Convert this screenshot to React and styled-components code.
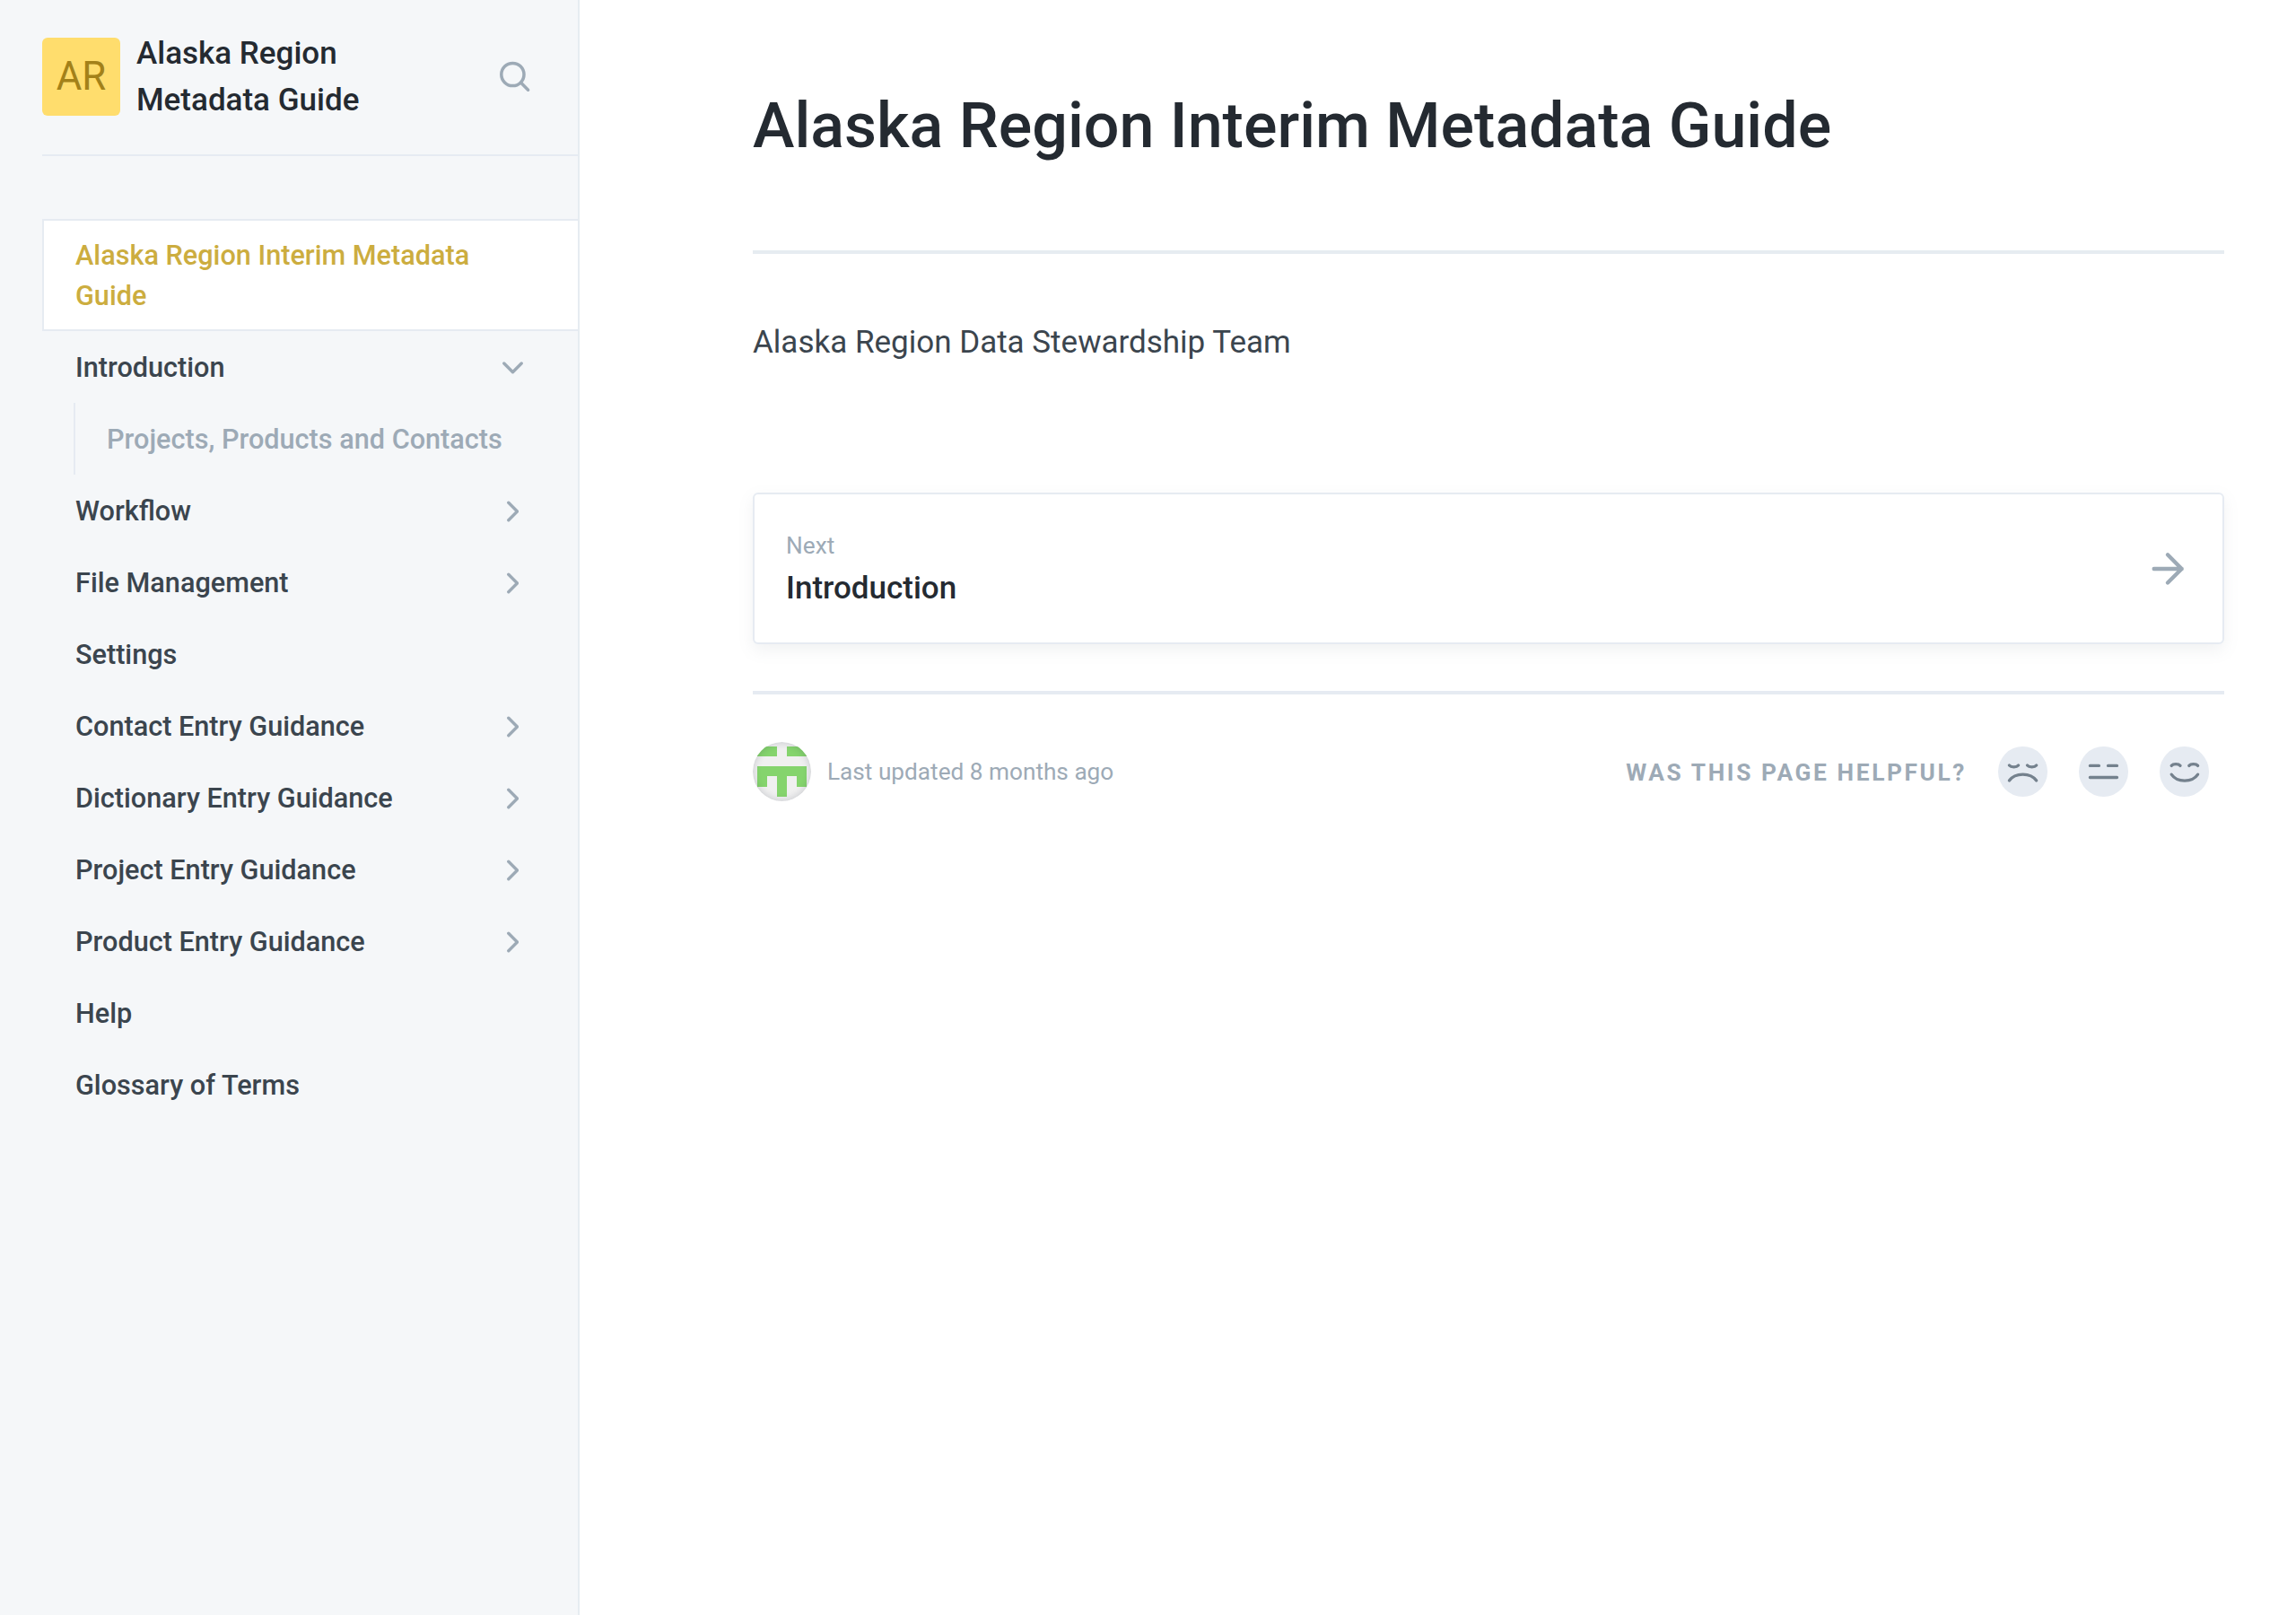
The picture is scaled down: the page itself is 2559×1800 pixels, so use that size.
import React from 'react';
import styled, { createGlobalStyle } from 'styled-components';

const Global = createGlobalStyle`
  * { box-sizing: border-box; }
  body { margin: 0; background: #fff; font-family: Roboto, sans-serif; color: #3b454e; }
  h1, p { margin: 0; }
  a { color: inherit; text-decoration: none; }
  svg { display: block; flex: none; }
`;

const Page = styled.div`display: flex; min-height: 1800px;`;

const Sidebar = styled.aside`
  flex: none; width: 646px; padding-left: 47px;
  background: #f5f7f9; border-right: 2px solid #e6ecf1;
`;
const Brand = styled.header`
  display: flex; align-items: center; height: 174px; padding: 0 52px 1px 0;
  border-bottom: 2px solid #e6ebf2;
`;
const Logo = styled.div`
  display: flex; align-items: center; justify-content: center; flex: none;
  width: 87px; height: 87px; border-radius: 6px;
  background: #ffdd6d; color: #a38119; font-size: 43.75px; line-height: 1;
`;
const BrandName = styled.div`
  flex: 1; padding: 1px 100px 0 18px;
  color: #242a31; font-size: 35px; font-weight: 500; line-height: 52px;
`;
const Nav = styled.nav`padding-top: 70px;`;
const NavLink = styled.a`
  display: flex; align-items: center; justify-content: space-between;
  min-height: 80px; padding: 0 55px 0 37px;
  font-size: 30.65px; font-weight: 500; line-height: 45px;
`;
const ActiveLink = styled(NavLink)`
  height: 125px; padding: 0 57px 0 35px; color: #ccad3f;
  background: #fff; border: 2px solid #e6ebf2; border-right: 0;
`;
const SubNav = styled.div`margin-left: 35px; border-left: 2px solid #e6ebf2;`;
const SubLink = styled(NavLink)`padding: 0 35px; color: #9daab6;`;
const IconSlot = styled.span`display: flex; justify-content: center; width: 35px; color: #9daab6;`;
const ChevronSlot = styled(IconSlot)`padding-top: 2px;`;

const Main = styled.main`flex: 1; padding: 96px 80px 0 193px;`;
const Title = styled.h1`color: #242a31; font-size: 70px; font-weight: 500; line-height: 88px;`;
const Rule = styled.div`height: 4px; background: #e6ebf2;`;
const TitleRule = styled(Rule)`margin-top: 95px; background: #e6ecf1;`;
const Paragraph = styled.p`margin-top: 71px; font-size: 35px; line-height: 56px;`;
const NextCard = styled.a`
  display: flex; align-items: center; justify-content: space-between;
  height: 169px; margin: 139px 0 52px; padding: 0 35px;
  border: 2px solid #e6ebf2; border-radius: 6px; background: #fff; color: #9daab6;
  box-shadow: 0 6.5px 17.5px rgba(116, 129, 141, 0.1);
`;
const NextText = styled.div`padding-top: 1px;`;
const NextLabel = styled.div`color: #9daab6; font-size: 26.25px; line-height: 42px;`;
const NextTitle = styled.div`padding-top: 1px; color: #242a31; font-size: 35px; font-weight: 500; line-height: 52px;`;
const PageFooter = styled.footer`display: flex; align-items: center; height: 66px; margin-top: 53px;`;
const Avatar = styled.div`
  position: relative; width: 65px; height: 66px; border-radius: 50%; overflow: hidden; background: #f0f0f0;
  &::after {
    content: ''; position: absolute; inset: 0; border-radius: 50%;
    box-shadow: inset 0 0 9px rgba(19, 31, 55, 0.2);
  }
`;
const Updated = styled.div`margin-left: 18px; color: #9daab6; font-size: 26.2px; line-height: 40px;`;
const Feedback = styled.div`display: flex; align-items: center; gap: 34.5px; margin-left: auto; padding-right: 17px;`;
const Question = styled.div`
  padding-top: 2px; color: #9daab6; font-size: 26.25px; font-weight: 700; line-height: 40px;
  letter-spacing: 2.625px; text-transform: uppercase;
`;
const Face = styled.span`
  display: flex; align-items: center; justify-content: center;
  width: 55.5px; height: 56px; border-radius: 50%; background: #e6ebf2; color: #74818d;
`;

const Stroke = ({ width, height, weight, d, children }) => (
  <svg width={width} height={height} viewBox={`0 0 ${width} ${height}`} fill="none" stroke="currentColor"
    strokeWidth={weight} strokeLinecap="round" strokeLinejoin="round">
    {children}
    <path d={d} />
  </svg>
);

const Chevron = ({ open }) => (
  <ChevronSlot>
    {open
      ? <Stroke width={23} height={14} weight={3.4} d="M1.8 2l9.7 9.7L21.2 2" />
      : <Stroke width={13} height={24} weight={3.4} d="M1.8 2.3l9.7 9.7-9.7 9.7" />}
  </ChevronSlot>
);

const faces = [
  'M12.4 21c2 2.5 8.2 2.5 10.2 0M32.5 21c2 2.5 8.2 2.5 10.2 0M12.4 38c6.5-9.3 23.8-9.3 30.3 0',
  'M12.4 21.4h10M32.5 21.4h10M12.4 34.5h30.1',
  'M13.2 21.4c2-2.5 7.8-2.5 9.8 0M32.8 21.4c2-2.5 7.8-2.5 9.8 0M13.2 31.2c6.2 9.2 23.2 9.2 29.4 0',
];

const items = [
  ['Workflow', true],
  ['File Management', true],
  ['Settings', false],
  ['Contact Entry Guidance', true],
  ['Dictionary Entry Guidance', true],
  ['Project Entry Guidance', true],
  ['Product Entry Guidance', true],
  ['Help', false],
  ['Glossary of Terms', false],
];

export default function App() {
  return (
    <Page>
      <Global />
      <Sidebar>
        <Brand>
          <Logo>AR</Logo>
          <BrandName>Alaska Region Metadata Guide</BrandName>
          <IconSlot>
            <Stroke width={35} height={35} weight={3.5} d="M23.7 24.3L31.6 32.2">
              <circle cx="14.4" cy="15" r="12.6" />
            </Stroke>
          </IconSlot>
        </Brand>
        <Nav>
          <ActiveLink>Alaska Region Interim Metadata Guide</ActiveLink>
          <NavLink>Introduction<Chevron open /></NavLink>
          <SubNav><SubLink>Projects, Products and Contacts</SubLink></SubNav>
          {items.map(([label, nested]) => (
            <NavLink key={label}>{label}{nested && <Chevron />}</NavLink>
          ))}
        </Nav>
      </Sidebar>
      <Main>
        <Title>Alaska Region Interim Metadata Guide</Title>
        <TitleRule />
        <Paragraph>Alaska Region Data Stewardship Team</Paragraph>
        <NextCard>
          <NextText>
            <NextLabel>Next</NextLabel>
            <NextTitle>Introduction</NextTitle>
          </NextText>
          <Stroke width={52} height={52} weight={4.4} d="M10.7 26h31M26 10.3L41.6 26 26 41.5" />
        </NextCard>
        <Rule />
        <PageFooter>
          <Avatar>
            <svg width="65" height="66" viewBox="0 0 65 66" fill="#85d46d">
              <path d="M5 5h22v11H5zM38 5h22v11H38zM5 27h55v23H49V38H38v23H27V38H16v12H5z" />
            </svg>
          </Avatar>
          <Updated>Last updated 8 months ago</Updated>
          <Feedback>
            <Question>Was this page helpful?</Question>
            {faces.map((d) => (
              <Face key={d}><Stroke width={55.5} height={56} weight={3.3} d={d} /></Face>
            ))}
          </Feedback>
        </PageFooter>
      </Main>
    </Page>
  );
}
